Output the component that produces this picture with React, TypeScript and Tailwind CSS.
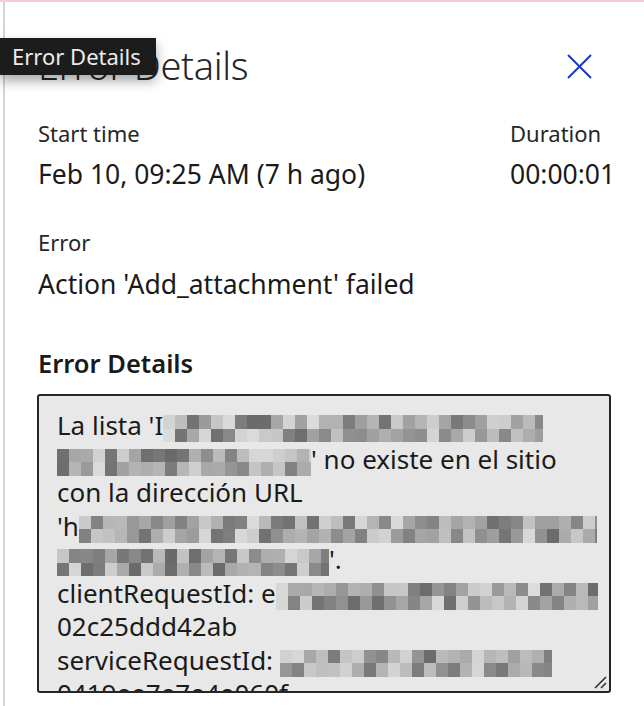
// deterministic grey shades for the pixelated redactions
function shade(seed: number, i: number) {
  const v = Math.abs(Math.sin(seed * 97.13 + i * 12.9898) * 43758.5453) % 1;
  const g = Math.round(105 + v * 115);
  return `rgb(${g},${g},${g})`;
}

function Redacted({ width, seed }: { width: number; seed: number }) {
  const cols = Math.ceil(width / 12);
  const cells = Array.from({ length: cols * 2 }, (_, i) => i);
  return (
    <span className="inline-block align-[-7px] h-[27px] overflow-hidden" style={{ width }}>
      <span className="grid blur-[0.6px]" style={{ gridTemplateColumns: `repeat(${cols}, 12px)` }}>
        {cells.map((i) => (
          <span key={i} className="h-[13.5px]" style={{ background: shade(seed, i) }} />
        ))}
      </span>
    </span>
  );
}

function App() {
  return (
    <div className="w-[644px] h-[706px] overflow-hidden bg-white font-['Noto_Sans',sans-serif] text-[#1a1a1a] border-t-2 border-[#f8c9d8] relative">
      <div className="flex h-full">
        <div className="w-[3px] shrink-0" />
        <div className="w-[2px] shrink-0 bg-[#d4d4d4]" />

        <div className="flex-1 pl-[33px] pr-[30px]">
          {/* header */}
          <div className="flex items-start justify-between pt-[44px]">
            <h1 className="text-[38px] font-light leading-[39px] tracking-[-0.3px] text-[#262626]">Error Details</h1>
            <button className="mr-[22px] mt-[8px] text-[#1838c6]">
              <svg width="25" height="25" viewBox="0 0 25 25" fill="none" stroke="currentColor" strokeWidth="2">
                <path d="M1 1 L24 24 M24 1 L1 24" />
              </svg>
            </button>
          </div>

          {/* start time / duration */}
          <div className="flex justify-between mt-[34px]">
            <div>
              <div className="text-[22px] leading-[28px] text-[#262626]">Start time</div>
              <div className="text-[26.5px] leading-[34px] mt-[10px]">Feb 10, 09:25 AM (7 h ago)</div>
            </div>
            <div className="w-[104px]">
              <div className="text-[22px] leading-[28px] text-[#262626]">Duration</div>
              <div className="text-[26.5px] leading-[34px] mt-[10px]">00:00:01</div>
            </div>
          </div>

          <div className="mt-[37px]">
            <div className="text-[22px] leading-[28px] text-[#262626]">Error</div>
            <div className="text-[26.5px] leading-[34px] mt-[11px]">Action 'Add_attachment' failed</div>
          </div>

          <div className="mt-[45px] text-[25.5px] font-semibold leading-[34px]">Error Details</div>

          {/* read-only textarea */}
          <div className="relative mt-[14px] -ml-[1px] w-[574px] h-[299px] border-2 border-[#262626] rounded-[3px] bg-[#e8e8e8] overflow-hidden">
            <div className="pl-[18px] pt-[13px] text-[26px] leading-[33.5px] whitespace-nowrap">
              <div>La lista 'I<Redacted width={380} seed={1} /></div>
              <div><Redacted width={254} seed={2} />' no existe en el sitio</div>
              <div>con la dirección URL</div>
              <div>'h<Redacted width={518} seed={3} /></div>
              <div><Redacted width={272} seed={4} />'.</div>
              <div>clientRequestId: e<Redacted width={322} seed={5} /></div>
              <div>02c25ddd42ab</div>
              <div>serviceRequestId: <Redacted width={272} seed={6} /></div>
              <div>0419ee7e7e4e060f</div>
            </div>
            <svg className="absolute right-[2px] bottom-[2px]" width="14" height="14" viewBox="0 0 14 14">
              <path d="M2 13 L13 2 M8 13 L13 8" stroke="#333" strokeWidth="1.6" />
            </svg>
          </div>
        </div>
      </div>

      {/* tooltip */}
      <div className="absolute left-0 top-[36px] h-[37px] pl-[12px] pr-[15px] flex items-center bg-[#1c1c1c] text-[#ececec] text-[22px] shadow-[0_6px_12px_rgba(0,0,0,0.35)]">
        Error Details
      </div>
    </div>
  );
}

export default App;
